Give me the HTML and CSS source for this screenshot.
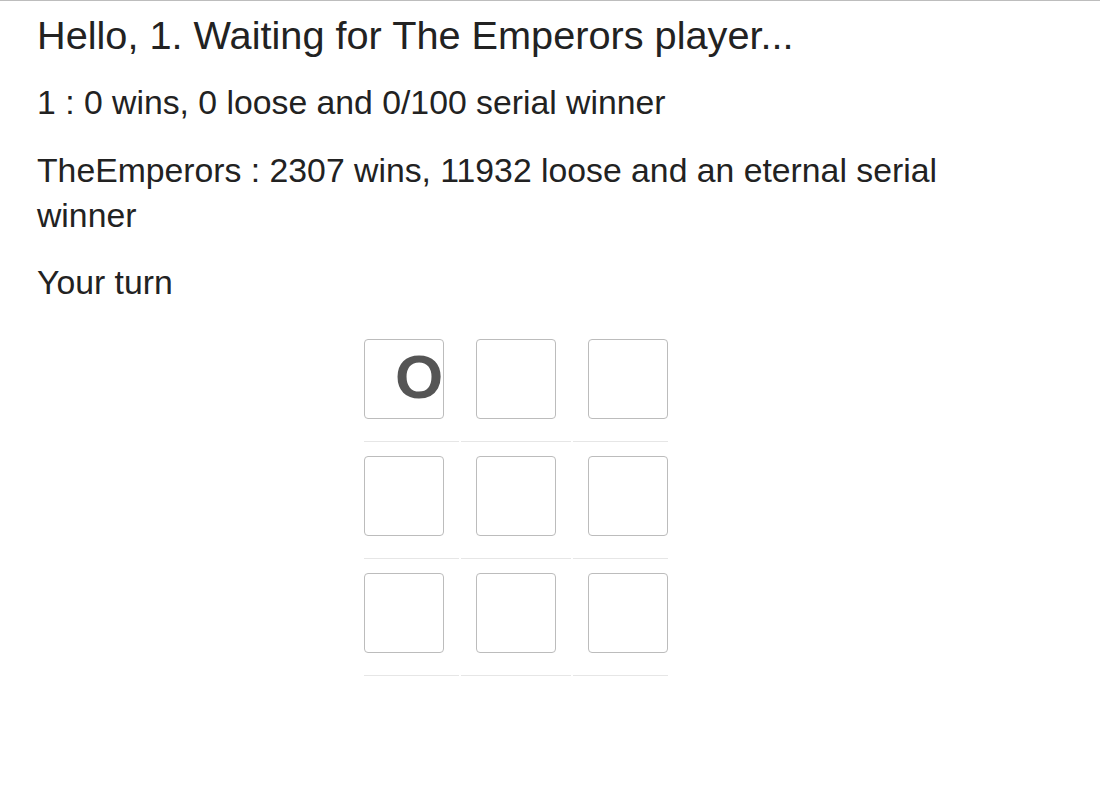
FILE: index.html
```html
<!DOCTYPE html>
<html>
<head>
<meta charset="utf-8">
<link rel="stylesheet" href="styles.css">
</head>
<body>
<div class="page">
  <h1 class="title">Hello, 1. Waiting for The Emperors player...</h1>
  <p class="line">1 : 0 wins, 0 loose and 0/100 serial winner</p>
  <p class="line">TheEmperors : 2307 wins, 11932 loose and an eternal serial winner</p>
  <p class="line turn">Your turn</p>
  <table class="board">
    <tr>
      <td class="c first"><div class="cell"><span class="mark">O</span></div></td>
      <td class="c mid"><div class="cell"></div></td>
      <td class="c last"><div class="cell"></div></td>
    </tr>
    <tr>
      <td class="c first"><div class="cell"></div></td>
      <td class="c mid"><div class="cell"></div></td>
      <td class="c last"><div class="cell"></div></td>
    </tr>
    <tr>
      <td class="c first"><div class="cell"></div></td>
      <td class="c mid"><div class="cell"></div></td>
      <td class="c last"><div class="cell"></div></td>
    </tr>
  </table>
</div>
</body>
</html>
```
FILE: styles.css
```css
html, body {
  margin: 0;
  padding: 0;
  background: #fff;
}
body {
  border-top: 1px solid #bdbdbd;
  font-family: "Liberation Sans", Arial, sans-serif;
  color: #222;
}
.page {
  padding-left: 37px;
  width: 940px;
}
.title {
  font-size: 39.7px;
  font-weight: normal;
  line-height: 44px;
  margin: 12px 0 23px;
}
.line {
  font-size: 33.75px;
  line-height: 45px;
  margin: 0 0 22.5px;
}
.line.turn {
  margin-bottom: 19.5px;
}
.board {
  border-collapse: separate;
  border-spacing: 2px;
  margin-left: 325px;
}
.c {
  padding: 12px 15px 22px;
  border-bottom: 1px solid #e6e6e6;
  vertical-align: top;
}
.c.first { padding-left: 0; }
.c.last { padding-right: 0; }
.cell {
  box-sizing: border-box;
  width: 80px;
  height: 80px;
  border: 1px solid #bcbcbc;
  border-radius: 4px;
  display: flex;
  align-items: center;
  padding-left: 30px;
}
.mark {
  font-size: 62px;
  font-weight: bold;
  color: #555;
  line-height: 1;
  margin-top: -3px;
}
```
